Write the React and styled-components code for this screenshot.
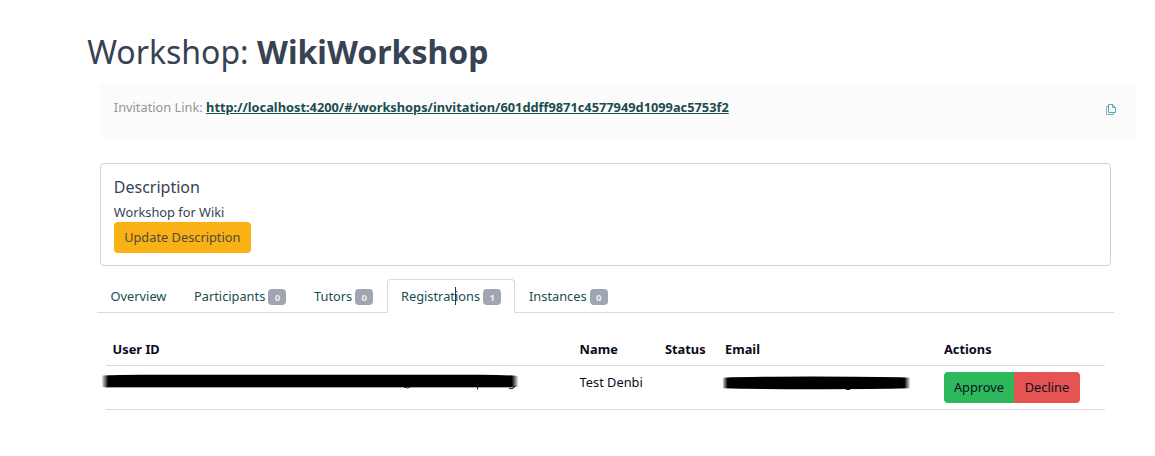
import React from "react";
import styled, { createGlobalStyle } from "styled-components";

const GlobalStyle = createGlobalStyle`
  *, *::before, *::after { box-sizing: border-box; }
  body {
    margin: 0;
    background: #fff;
    color: #374253;
    font-family: "Noto Sans", "Open Sans", sans-serif;
    font-size: 12.8px;
    line-height: 19px;
  }
`;

const Page = styled.main`
  width: 1155px;
  height: 456px;
  padding-top: 32px;
  overflow: hidden;
`;

const Title = styled.h1`
  margin: 0 0 13px 87.2px;
  font-size: 32px;
  line-height: 39px;
  font-weight: 400;
  white-space: nowrap;
`;

const LinkPanel = styled.section`
  display: flex;
  justify-content: space-between;
  width: 1037px;
  height: 54px;
  margin-left: 100px;
  padding: 14px 20px 0 13.8px;
  border-radius: 4px;
  background: #fbfbfb;
  color: #939699;
`;

const InviteLink = styled.a`
  color: #1b4d4f;
  font-weight: 700;
  text-decoration: underline;
`;

const CopyButton = styled.button`
  display: block;
  width: 12px;
  height: 13px;
  margin-top: 5px;
  padding: 0;
  border: 0;
  background: none;
  color: #5ba9b0;
  svg { display: block; }
`;

const Card = styled.section`
  width: 1011px;
  height: 103px;
  margin: 25px 0 0 100px;
  padding: 13px 12.8px;
  border: 1px solid #d0d1d3;
  border-radius: 4px;
`;

const CardTitle = styled.h5`
  margin: 0 0 6px;
  font-size: 16px;
  line-height: 20px;
  font-weight: 400;
`;

const CardText = styled.p`
  margin: 0;
`;

const Button = styled.button`
  display: block;
  width: ${(p) => p.$width}px;
  height: 31px;
  padding: 0;
  border: 0;
  border-radius: ${(p) => p.$radius || "4px"};
  background: ${(p) => p.$bg};
  color: ${(p) => p.$color || "#091220"};
  font: inherit;
  text-align: center;
`;

const Tabs = styled.nav`
  display: flex;
  width: 1017px;
  height: 34px;
  margin: 13px 0 0 97px;
  border-bottom: 1px solid #d8dadf;
`;

const Tab = styled.a`
  display: flex;
  position: relative;
  width: ${(p) => p.$width}px;
  height: 34px;
  padding: 7px 0 0 ${(p) => p.$inset || 13}px;
  border: 1px solid ${(p) => (p.$active ? "#d8dadf" : "transparent")};
  border-bottom-color: ${(p) => (p.$active ? "#fff" : "transparent")};
  border-radius: 4px 4px 0 0;
  color: #1b4d4f;
  white-space: nowrap;
`;

const Badge = styled.span`
  width: 18px;
  height: 16px;
  margin: 2px 0 0 3.2px;
  border-radius: 4px;
  background: #9fa6b2;
  color: #ebedef;
  font-size: 9.6px;
  line-height: 18px;
  font-weight: 700;
  text-align: center;
`;

const Caret = styled.i`
  position: absolute;
  left: 67px;
  top: 7px;
  width: 1px;
  height: 18px;
  background: #163c40;
`;

const Table = styled.table`
  width: 999px;
  margin: 21px 0 0 106px;
  border-collapse: separate;
  border-spacing: 0;
  table-layout: fixed;
  color: #080b1b;
`;

const HeadCell = styled.th`
  height: 32px;
  padding: 6px 0 6px 7px;
  border-bottom: 1px solid #d8dadf;
  text-align: left;
  vertical-align: top;
  &:first-child { padding-left: 6.6px; }
  &:nth-child(2) { padding-left: 6.6px; }
`;

const Cell = styled.td`
  height: 44px;
  padding: ${(p) => (p.$actions ? "6px 0 6px 7px" : "7px 0 5px 6.6px")};
  border-bottom: 1px solid #d8dadf;
  vertical-align: top;
`;

const ActionGroup = styled.div`
  display: flex;
`;

const Redaction = styled.svg`
  display: block;
  margin: ${(p) => p.$offset};
  overflow: visible;
`;

const tabs = [
  { label: "Overview", width: 83, inset: 12.6 },
  { label: "Participants", count: 0, width: 120 },
  { label: "Tutors", count: 0, width: 87 },
  { label: "Registrations", count: 1, width: 128, active: true },
  { label: "Instances", count: 0, width: 110 },
];

const columns = [
  ["User ID", 467],
  ["Name", 85],
  ["Status", 60],
  ["Email", 219],
  ["Actions", 168],
];

function CopyIcon() {
  return (
    <svg width="12" height="13" viewBox="0 0 12 13" fill="none" stroke="currentColor" strokeWidth="1">
      <path d="M3.5 1.5h4l3 3v5h-7zM7.5 1.5v3h3" />
      <path d="M3.5 3.5h-2v8h7v-2" strokeOpacity=".8" />
    </svg>
  );
}

function UserIdRedaction() {
  return (
    <Redaction width="418" height="16" $offset="1px 0 0 -11.6px" aria-hidden="true">
      <defs>
        <linearGradient id="userFade">
          <stop offset="0" stopOpacity="0.1" />
          <stop offset="0.015" stopOpacity="1" />
          <stop offset="0.985" stopOpacity="1" />
          <stop offset="1" stopOpacity="0.1" />
        </linearGradient>
      </defs>
      <path d="M1 1.500Q18 .7 40 .7H380Q402 .8 417 2V13H1Z" fill="url(#userFade)" />
      <path d="M4 13.500H414" stroke="#000" strokeOpacity=".35" />
      <path d="M303 13q4 2 6 0M376.500 12v3.500M408 14.500q5 1 6-3" fill="none" stroke="#111827" />
    </Redaction>
  );
}

function EmailRedaction() {
  return (
    <Redaction width="188" height="14" $offset="3px 0 0 -2px" aria-hidden="true">
      <defs>
        <linearGradient id="emailFade">
          <stop offset="0" stopOpacity="0.2" />
          <stop offset="0.025" stopOpacity="1" />
          <stop offset="0.97" stopOpacity="1" />
          <stop offset="1" stopOpacity="0.1" />
        </linearGradient>
      </defs>
      <path d="M0 1.700Q30 .6 90 .6T187 1.700V12.300Q150 13.200 90 13.200T0 12.300Z" fill="url(#emailFade)" />
      <path d="M123 13.500h4" stroke="#111827" />
    </Redaction>
  );
}

export default function App() {
  return (
    <>
      <GlobalStyle />
      <Page>
        <Title>Workshop: <strong>WikiWorkshop</strong></Title>
        <LinkPanel>
          <div>
            Invitation Link:{" "}
            <InviteLink href="#">http://localhost:4200/#/workshops/invitation/601ddff9871c4577949d1099ac5753f2</InviteLink>
          </div>
          <CopyButton aria-label="Copy invitation link"><CopyIcon /></CopyButton>
        </LinkPanel>
        <Card>
          <CardTitle>Description</CardTitle>
          <CardText>Workshop for Wiki</CardText>
          <Button $width={137} $bg="#f9b115" $color="#4f4b3b">Update Description</Button>
        </Card>
        <Tabs>
          {tabs.map((tab) => (
            <Tab key={tab.label} $width={tab.width} $inset={tab.inset} $active={tab.active}>
              {tab.label}
              {tab.count !== undefined && <Badge>{tab.count}</Badge>}
              {tab.active && <Caret />}
            </Tab>
          ))}
        </Tabs>
        <Table>
          <colgroup>
            {columns.map(([name, width]) => <col key={name} width={width} />)}
          </colgroup>
          <thead>
            <tr>{columns.map(([name]) => <HeadCell key={name}>{name}</HeadCell>)}</tr>
          </thead>
          <tbody>
            <tr>
              <Cell><UserIdRedaction /></Cell>
              <Cell>Test Denbi</Cell>
              <Cell />
              <Cell><EmailRedaction /></Cell>
              <Cell $actions>
                <ActionGroup>
                  <Button $width={70} $bg="#2eb85c" $radius="4px 0 0 4px">Approve</Button>
                  <Button $width={66} $bg="#e55353" $radius="0 4px 4px 0">Decline</Button>
                </ActionGroup>
              </Cell>
            </tr>
          </tbody>
        </Table>
      </Page>
    </>
  );
}
